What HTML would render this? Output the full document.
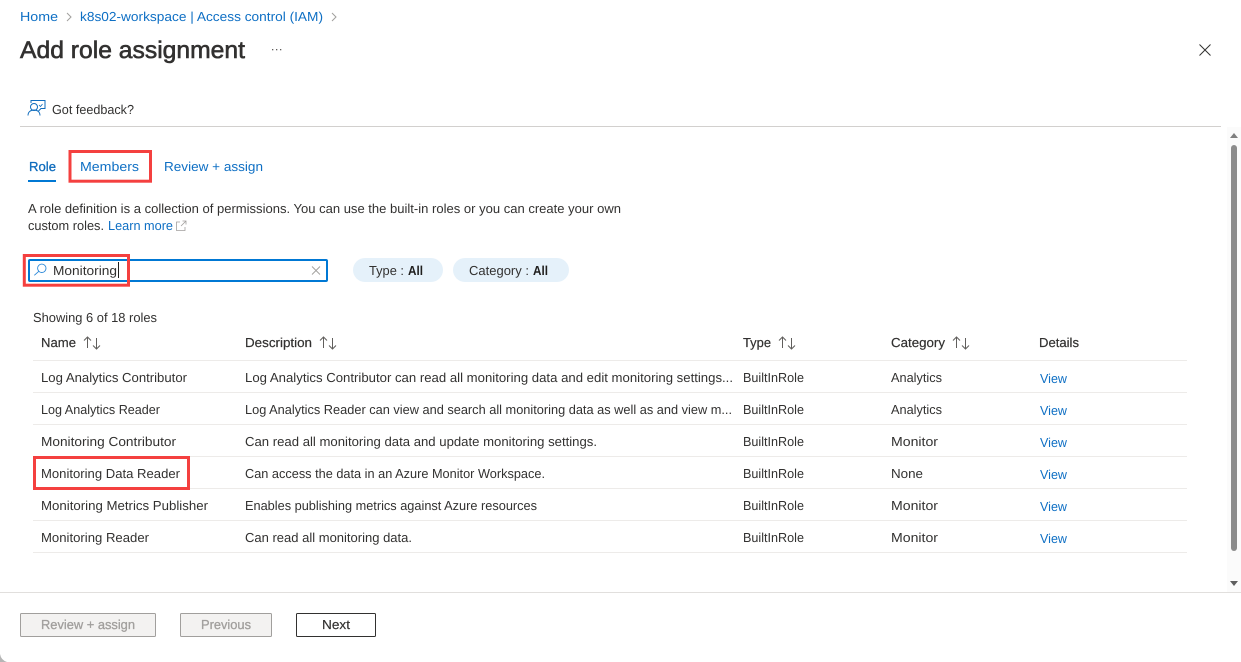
<!DOCTYPE html>
<html><head><meta charset="utf-8"><title>Add role assignment</title>
<style>
html,body{margin:0;padding:0;width:1241px;height:662px;overflow:hidden;background:#fff}
svg{display:block}
text{font-family:"Liberation Sans",sans-serif;font-size:13px;fill:#323130;text-rendering:geometricPrecision}
.l{fill:#0e6fc4}
.h{stroke:#323130;stroke-width:.2px}
</style></head><body>
<svg width="1241" height="662" viewBox="0 0 1241 662" xmlns="http://www.w3.org/2000/svg">
<rect width="1241" height="662" fill="#fff"/>
<!-- breadcrumb -->
<text class="l" x="20" y="21" textLength="38" lengthAdjust="spacingAndGlyphs">Home</text>
<path d="M67 13l4 4-4 4" fill="none" stroke="#a19f9d"/>
<text class="l" x="80" y="21" textLength="243" lengthAdjust="spacingAndGlyphs">k8s02-workspace | Access control (IAM)</text>
<path d="M332 13l4 4-4 4" fill="none" stroke="#a19f9d"/>
<!-- title -->
<text x="20" y="58" textLength="225" lengthAdjust="spacingAndGlyphs" style="font-size:24px;stroke:#323130;stroke-width:.6px">Add role assignment</text>
<g fill="#605e5c"><rect x="272" y="49" width="1.3" height="1.3"/><rect x="276" y="49" width="1.3" height="1.3"/><rect x="280" y="49" width="1.3" height="1.3"/></g>
<path d="M1199.500 44.500l11 11m0-11l-11 11" stroke="#323130" fill="none"/>
<!-- feedback -->
<g fill="none" stroke="#0f6cbd" stroke-width="1">
<circle cx="34" cy="107" r="3.500"/>
<path d="M28 115.500c0-3.500 2.500-5.500 6-5.500s6 2 6 5.500"/>
<path d="M31 103v-2.500h14v8h-4l-2.500 2.500"/>
<path d="M39 105l1.500 1.500 2-2.500" stroke-width=".8"/>
</g>
<text x="52" y="114" textLength="82" lengthAdjust="spacingAndGlyphs">Got feedback?</text>
<rect x="20" y="126" width="1201" height="1" fill="#d2d0ce"/>
<!-- scrollbar -->
<rect x="1227" y="127" width="14" height="465" fill="#fbfbfb"/>
<path d="M1230 138l4-5 4 5z" fill="#7f7f7f"/>
<rect x="1231" y="145" width="6" height="406" rx="3" fill="#8c8c8c"/>
<path d="M1230 581l4 5 4-5z" fill="#5f5f5f"/>
<!-- tabs -->
<text x="29" y="171" textLength="27" lengthAdjust="spacingAndGlyphs" style="fill:#0f6cbd;stroke:#0f6cbd;stroke-width:.3px">Role</text>
<rect x="28" y="180" width="28" height="2" fill="#0078d4"/>
<text class="l" x="80" y="171" textLength="59" lengthAdjust="spacingAndGlyphs">Members</text>
<text class="l" x="164" y="171" textLength="99" lengthAdjust="spacingAndGlyphs">Review + assign</text>
<rect x="70" y="151.500" width="80.500" height="29.700" fill="none" stroke="#f4403f" stroke-width="3"/>
<!-- description -->
<text x="28" y="213" textLength="593" lengthAdjust="spacingAndGlyphs">A role definition is a collection of permissions. You can use the built-in roles or you can create your own</text>
<text x="28" y="230" textLength="76" lengthAdjust="spacingAndGlyphs">custom roles.</text>
<text class="l" x="108" y="230" textLength="65" lengthAdjust="spacingAndGlyphs">Learn more</text>
<g fill="none" stroke="#a19f9d" stroke-width=".8"><path d="M180 222h-3.500v8.500h8.500v-3.500"/><path d="M181 226l5-5m-3.500 0h3.500v3.500"/></g>
<!-- search -->
<rect x="29" y="260" width="298" height="21" rx="1" fill="#fff" stroke="#0078d4" stroke-width="2"/>
<g fill="none" stroke="#2b88d8" stroke-width=".9"><circle cx="41.800" cy="268.300" r="4.200"/><path d="M38.800 271.300l-4.500 4"/></g>
<text x="53" y="275" textLength="64" lengthAdjust="spacingAndGlyphs">Monitoring</text>
<rect x="118" y="262" width="1" height="16" fill="#201f1e"/>
<path d="M312 266.500l8 8m0-8l-8 8" stroke="#a19f9d" stroke-width=".9" fill="none"/>
<rect x="24.300" y="255.500" width="104.200" height="29.700" fill="none" stroke="#f4403f" stroke-width="3"/>
<!-- pills -->
<rect x="353" y="258" width="90" height="24" rx="12" fill="#e5f1fa"/>
<text x="369" y="275" textLength="35" lengthAdjust="spacingAndGlyphs">Type :</text>
<text x="408" y="275" textLength="15" lengthAdjust="spacingAndGlyphs" style="font-weight:700;fill:#201f1e">All</text>
<rect x="453" y="258" width="116" height="24" rx="12" fill="#e5f1fa"/>
<text x="469" y="275" textLength="60" lengthAdjust="spacingAndGlyphs">Category :</text>
<text x="533" y="275" textLength="15" lengthAdjust="spacingAndGlyphs" style="font-weight:700;fill:#201f1e">All</text>
<text x="33" y="322" textLength="124" lengthAdjust="spacingAndGlyphs">Showing 6 of 18 roles</text>
<!-- header -->
<text class="h" x="41" y="347" textLength="35" lengthAdjust="spacingAndGlyphs">Name</text>
<text class="h" x="245" y="347" textLength="67" lengthAdjust="spacingAndGlyphs">Description</text>
<text class="h" x="743" y="347" textLength="28" lengthAdjust="spacingAndGlyphs">Type</text>
<text class="h" x="891" y="347" textLength="54" lengthAdjust="spacingAndGlyphs">Category</text>
<text class="h" x="1039" y="347" textLength="40" lengthAdjust="spacingAndGlyphs">Details</text>
<g fill="none" stroke="#605e5c" stroke-width="1">
<path d="M87.500 348v-11m-3.500 3.500l3.500-3.500 3.500 3.500M96.500 338v11m-3.500-3.500l3.500 3.500 3.500-3.500"/>
<path d="M323.500 348v-11m-3.500 3.500l3.500-3.500 3.500 3.500M332.500 338v11m-3.500-3.500l3.500 3.500 3.500-3.500"/>
<path d="M782.500 348v-11m-3.500 3.500l3.500-3.500 3.500 3.500M791.500 338v11m-3.500-3.500l3.500 3.500 3.500-3.500"/>
<path d="M956.500 348v-11m-3.500 3.500l3.500-3.500 3.500 3.500M965.500 338v11m-3.500-3.500l3.500 3.500 3.500-3.500"/>
</g>
<g fill="#edebe9">
<rect x="33" y="360" width="1154" height="1"/>
<rect x="33" y="392" width="1154" height="1"/>
<rect x="33" y="424" width="1154" height="1"/>
<rect x="33" y="456" width="1154" height="1"/>
<rect x="33" y="488" width="1154" height="1"/>
<rect x="33" y="520" width="1154" height="1"/>
<rect x="33" y="552" width="1154" height="1"/>
</g>
<!-- rows -->
<text x="41" y="382" textLength="146" lengthAdjust="spacingAndGlyphs">Log Analytics Contributor</text>
<text x="245" y="382" textLength="488" lengthAdjust="spacingAndGlyphs">Log Analytics Contributor can read all monitoring data and edit monitoring settings...</text>
<text x="743" y="382" textLength="61" lengthAdjust="spacingAndGlyphs">BuiltInRole</text>
<text x="891" y="382" textLength="51" lengthAdjust="spacingAndGlyphs">Analytics</text>
<text class="l" x="1040" y="383" textLength="27" lengthAdjust="spacingAndGlyphs">View</text>

<text x="41" y="414" textLength="119" lengthAdjust="spacingAndGlyphs">Log Analytics Reader</text>
<text x="245" y="414" textLength="487" lengthAdjust="spacingAndGlyphs">Log Analytics Reader can view and search all monitoring data as well as and view m...</text>
<text x="743" y="414" textLength="61" lengthAdjust="spacingAndGlyphs">BuiltInRole</text>
<text x="891" y="414" textLength="51" lengthAdjust="spacingAndGlyphs">Analytics</text>
<text class="l" x="1040" y="415" textLength="27" lengthAdjust="spacingAndGlyphs">View</text>

<text x="41" y="446" textLength="135" lengthAdjust="spacingAndGlyphs">Monitoring Contributor</text>
<text x="245" y="446" textLength="352" lengthAdjust="spacingAndGlyphs">Can read all monitoring data and update monitoring settings.</text>
<text x="743" y="446" textLength="61" lengthAdjust="spacingAndGlyphs">BuiltInRole</text>
<text x="891" y="446" textLength="47" lengthAdjust="spacingAndGlyphs">Monitor</text>
<text class="l" x="1040" y="447" textLength="27" lengthAdjust="spacingAndGlyphs">View</text>

<text x="41" y="478" textLength="139" lengthAdjust="spacingAndGlyphs">Monitoring Data Reader</text>
<text x="245" y="478" textLength="300" lengthAdjust="spacingAndGlyphs">Can access the data in an Azure Monitor Workspace.</text>
<text x="743" y="478" textLength="61" lengthAdjust="spacingAndGlyphs">BuiltInRole</text>
<text x="891" y="478" textLength="32" lengthAdjust="spacingAndGlyphs">None</text>
<text class="l" x="1040" y="479" textLength="27" lengthAdjust="spacingAndGlyphs">View</text>

<text x="41" y="510" textLength="167" lengthAdjust="spacingAndGlyphs">Monitoring Metrics Publisher</text>
<text x="245" y="510" textLength="292" lengthAdjust="spacingAndGlyphs">Enables publishing metrics against Azure resources</text>
<text x="743" y="510" textLength="61" lengthAdjust="spacingAndGlyphs">BuiltInRole</text>
<text x="891" y="510" textLength="47" lengthAdjust="spacingAndGlyphs">Monitor</text>
<text class="l" x="1040" y="511" textLength="27" lengthAdjust="spacingAndGlyphs">View</text>

<text x="41" y="542" textLength="108" lengthAdjust="spacingAndGlyphs">Monitoring Reader</text>
<text x="245" y="542" textLength="167" lengthAdjust="spacingAndGlyphs">Can read all monitoring data.</text>
<text x="743" y="542" textLength="61" lengthAdjust="spacingAndGlyphs">BuiltInRole</text>
<text x="891" y="542" textLength="47" lengthAdjust="spacingAndGlyphs">Monitor</text>
<text class="l" x="1040" y="543" textLength="27" lengthAdjust="spacingAndGlyphs">View</text>

<rect x="34.500" y="457.500" width="154" height="31" fill="none" stroke="#f4403f" stroke-width="3"/>
<!-- footer -->
<rect x="0" y="592" width="1241" height="1" fill="#e1dfdd"/>
<rect x="20.500" y="613.500" width="135" height="23" rx="1" fill="#f3f2f1" stroke="#a19f9d"/>
<text x="41" y="629" textLength="94" lengthAdjust="spacingAndGlyphs" style="fill:#a19f9d;stroke:#a19f9d;stroke-width:.3px">Review + assign</text>
<rect x="180.500" y="613.500" width="91" height="23" rx="1" fill="#f3f2f1" stroke="#a19f9d"/>
<text x="201" y="629" textLength="50" lengthAdjust="spacingAndGlyphs" style="fill:#a19f9d;stroke:#a19f9d;stroke-width:.3px">Previous</text>
<rect x="296.500" y="613.500" width="79" height="23" rx="1" fill="#fff" stroke="#323130"/>
<text x="322" y="629" textLength="28" lengthAdjust="spacingAndGlyphs" style="stroke:#323130;stroke-width:.2px">Next</text>
<path d="M0 654Q1 660 7 662H0z" fill="#b5b5b5"/>
</svg>
</body></html>
